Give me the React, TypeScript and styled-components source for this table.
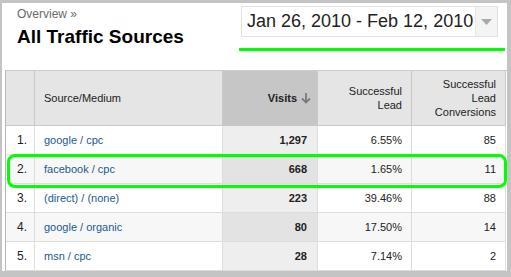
import styled, { createGlobalStyle } from 'styled-components';

const GlobalStyle = createGlobalStyle`
  body {
    margin: 0;
    background: #ffffff;
    font-family: 'Liberation Sans', Arial, sans-serif;
  }
`;

interface Row {
  source: string;
  visits: string;
  lead: string;
  conversions: string;
}

const rows: Row[] = [
  { source: 'google / cpc', visits: '1,297', lead: '6.55%', conversions: '85' },
  { source: 'facebook / cpc', visits: '668', lead: '1.65%', conversions: '11' },
  { source: '(direct) / (none)', visits: '223', lead: '39.46%', conversions: '88' },
  { source: 'google / organic', visits: '80', lead: '17.50%', conversions: '14' },
  { source: 'msn / cpc', visits: '28', lead: '7.14%', conversions: '2' },
];

const Frame = styled.div`
  position: relative;
  box-sizing: border-box;
  width: 511px;
  height: 277px;
  border-top: 3px solid #c4c4c4;
  border-left: 2px solid #c4c4c4;
  border-right: 4px solid #c4c4c4;
  border-bottom: 6px solid #c4c4c4;
  display: flex;
  flex-direction: column;
`;

const Header = styled.div`
  display: flex;
  justify-content: space-between;
  height: 67px;
  padding: 0 2px 0 15px;
`;

const TitleBlock = styled.div`
  display: flex;
  flex-direction: column;
  padding-top: 4px;
`;

const Crumb = styled.div`
  font-size: 12px;
  line-height: 14px;
  color: #6a6a6a;
`;

const Title = styled.h1`
  margin: 5px 0 0;
  font-size: 19px;
  line-height: 22px;
  font-weight: bold;
  color: #000;
`;

const DateBlock = styled.div`
  display: flex;
  flex-direction: column;
  padding-top: 3px;
`;

const DateBox = styled.div`
  display: flex;
  align-items: stretch;
  box-sizing: border-box;
  width: 257px;
  height: 31px;
  margin-left: 2px;
  border: 1px solid #e2e2e2;
`;

const DateText = styled.div`
  flex: 1;
  display: flex;
  align-items: center;
  padding-left: 5px;
  font-size: 18px;
  color: #222;
  white-space: nowrap;
`;

const DateArrow = styled.div`
  width: 21px;
  display: flex;
  align-items: center;
  justify-content: center;
  background: #f4f4f4;
  border-left: 1px solid #e6e6e6;
`;

const GreenRule = styled.div`
  width: 266px;
  height: 3px;
  margin-top: 11px;
  background: #00ff00;
`;

const Table = styled.div`
  display: grid;
  grid-template-columns: 29px 188px 95px 94px 94px;
  margin-left: 3px;
  border-left: 1px solid #b8b8b8;
  border-top: 1px solid #cccccc;
`;

const HeadCell = styled.div<{ $align?: 'left' | 'right'; $sorted?: boolean }>`
  height: 55px;
  display: flex;
  align-items: center;
  justify-content: ${(p) => (p.$align === 'left' ? 'flex-start' : 'flex-end')};
  text-align: ${(p) => p.$align ?? 'right'};
  box-sizing: border-box;
  padding: 0 ${(p) => (p.$sorted ? 6 : 9)}px 0 9px;
  background: ${(p) => (p.$sorted ? '#c6c6c6' : '#e5e5e5')};
  border-right: 1px solid #c8c8c8;
  border-bottom: 1px solid #c8c8c8;
  font-size: 11px;
  line-height: 14px;
  color: #222;
  font-weight: ${(p) => (p.$sorted ? 'bold' : 'normal')};
`;

const SortArrow = styled.svg`
  margin-left: 4px;
`;

const Cell = styled.div<{ $even: boolean; $kind?: 'num' | 'source' | 'visits' | 'value' }>`
  height: 29px;
  display: flex;
  align-items: center;
  justify-content: ${(p) => (p.$kind === 'source' ? 'flex-start' : 'flex-end')};
  box-sizing: border-box;
  padding: ${(p) =>
    p.$kind === 'source' ? '0 0 0 9px' : p.$kind === 'num' ? '0 7px 0 0' : p.$kind === 'visits' ? '0 10px 0 0' : '0 9px 0 0'};
  background: ${(p) =>
    p.$kind === 'visits' ? (p.$even ? '#e3e3e3' : '#eeeeee') : p.$even ? '#f7f7f7' : '#ffffff'};
  border-right: 1px solid #dddddd;
  border-bottom: 1px solid #dddddd;
  font-size: ${(p) => (p.$kind === 'num' ? 12 : 11)}px;
  color: ${(p) => (p.$kind === 'source' ? '#1a5a96' : '#222')};
  font-weight: ${(p) => (p.$kind === 'visits' ? 'bold' : 'normal')};
  white-space: nowrap;
`;

const Highlight = styled.div`
  position: absolute;
  left: 5px;
  top: 151px;
  width: 500px;
  height: 34px;
  box-sizing: border-box;
  border: 3px solid #00ff00;
  border-radius: 8px;
  pointer-events: none;
`;

export default function App() {
  return (
    <>
      <GlobalStyle />
      <Frame>
        <Header>
          <TitleBlock>
            <Crumb>Overview »</Crumb>
            <Title>All Traffic Sources</Title>
          </TitleBlock>
          <DateBlock>
            <DateBox>
              <DateText>Jan 26, 2010 - Feb 12, 2010</DateText>
              <DateArrow>
                <svg width="11" height="6" viewBox="0 0 11 6">
                  <path d="M0 0 H11 L5.5 6 Z" fill="#a9a9a9" />
                </svg>
              </DateArrow>
            </DateBox>
            <GreenRule />
          </DateBlock>
        </Header>
        <Table>
          <HeadCell />
          <HeadCell $align="left">Source/Medium</HeadCell>
          <HeadCell $sorted>
            Visits
            <SortArrow width="10" height="11" viewBox="0 0 10 11">
              <path d="M5 0 V9 M1 5.5 L5 9.5 L9 5.5" stroke="#7a7a7a" strokeWidth="1.8" fill="none" />
            </SortArrow>
          </HeadCell>
          <HeadCell>
            Successful
            <br />
            Lead
          </HeadCell>
          <HeadCell>
            Successful
            <br />
            Lead
            <br />
            Conversions
          </HeadCell>
          {rows.map((r, i) => {
            const even = i % 2 === 1;
            return [
              <Cell key={`n${i}`} $even={even} $kind="num">
                {i + 1}.
              </Cell>,
              <Cell key={`s${i}`} $even={even} $kind="source">
                {r.source}
              </Cell>,
              <Cell key={`v${i}`} $even={even} $kind="visits">
                {r.visits}
              </Cell>,
              <Cell key={`l${i}`} $even={even} $kind="value">
                {r.lead}
              </Cell>,
              <Cell key={`c${i}`} $even={even} $kind="value">
                {r.conversions}
              </Cell>,
            ];
          })}
        </Table>
        <Highlight />
      </Frame>
    </>
  );
}
